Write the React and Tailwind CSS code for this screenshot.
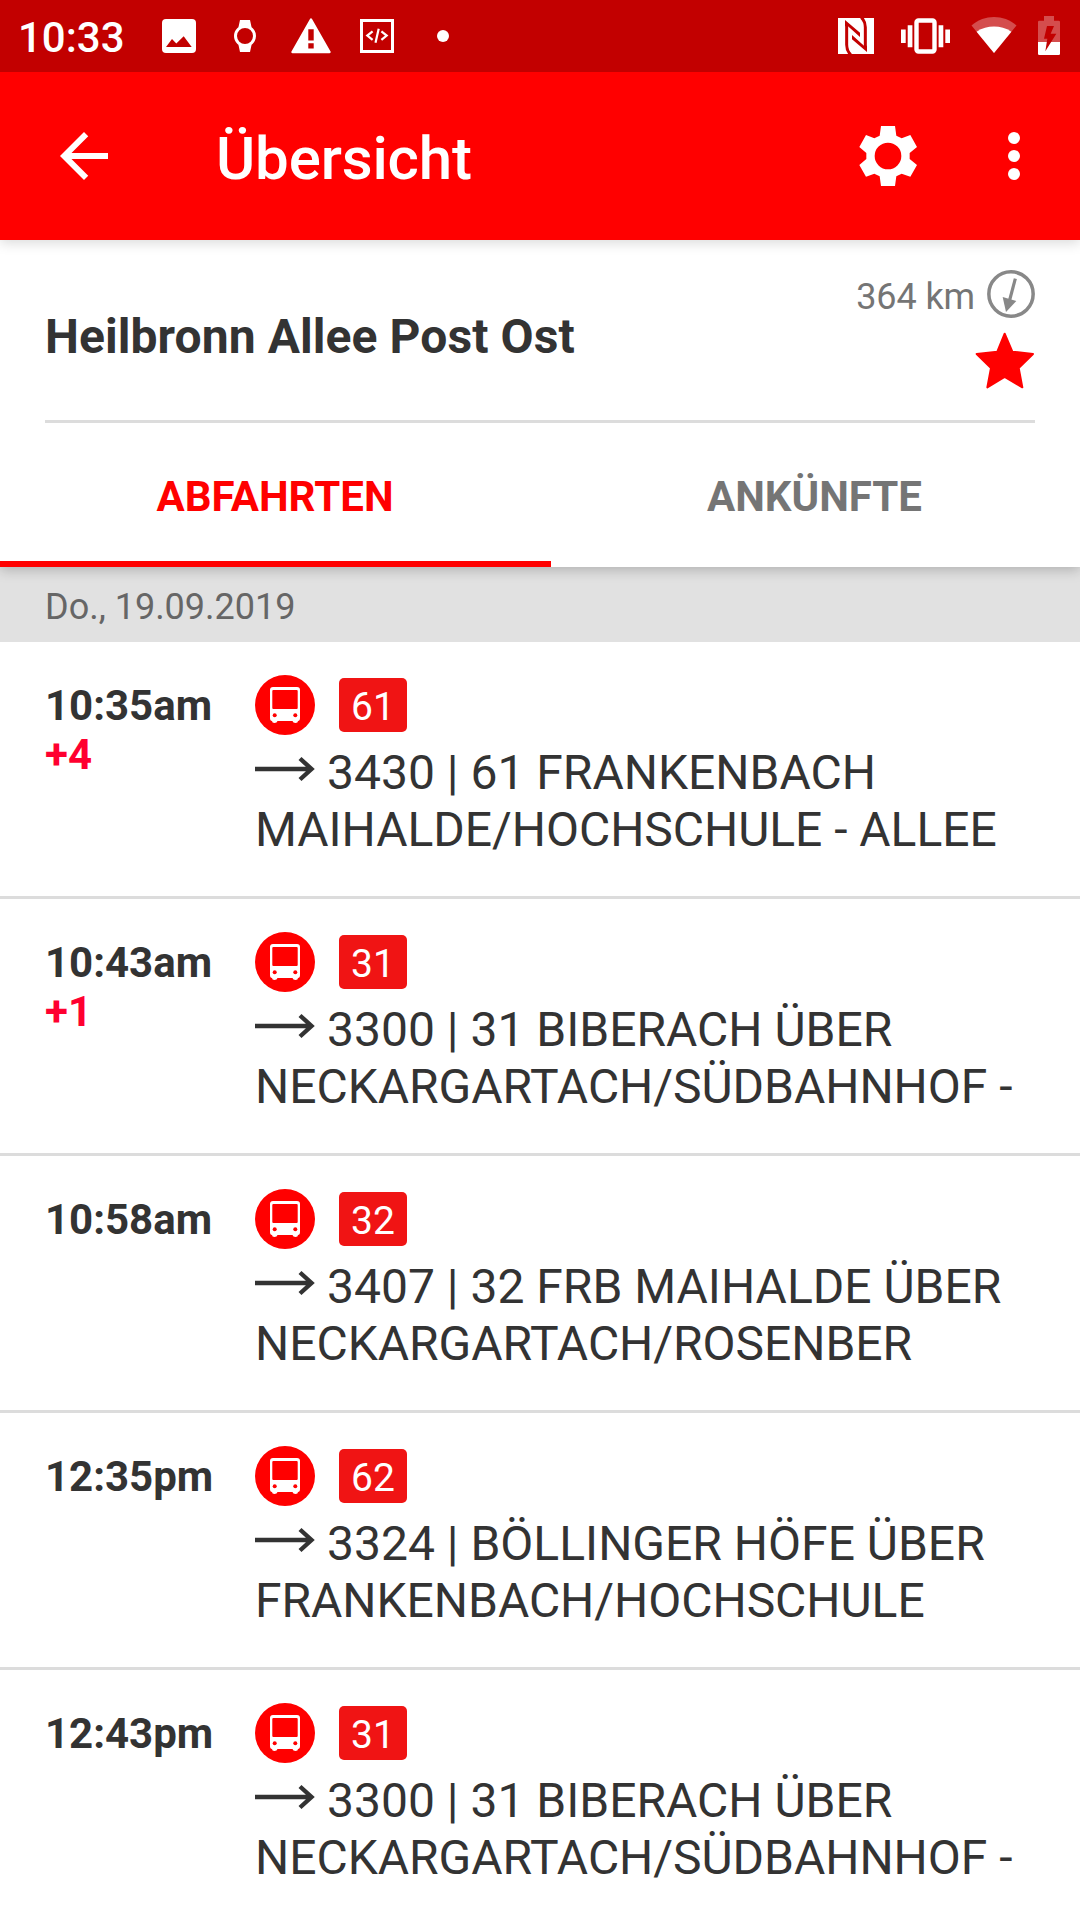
import React, { useState } from "react";
import { MdArrowBack } from "react-icons/md";

const DEPARTURES = [
  { time: "10:35am", delay: "+4", line: "61", to: ["3430 | 61 FRANKENBACH", "MAIHALDE/HOCHSCHULE - ALLEE"] },
  { time: "10:43am", delay: "+1", line: "31", to: ["3300 | 31 BIBERACH ÜBER", "NECKARGARTACH/SÜDBAHNHOF -"] },
  { time: "10:58am", delay: "", line: "32", to: ["3407 | 32 FRB MAIHALDE ÜBER", "NECKARGARTACH/ROSENBER"] },
  { time: "12:35pm", delay: "", line: "62", to: ["3324 | BÖLLINGER HÖFE ÜBER", "FRANKENBACH/HOCHSCHULE"] },
  { time: "12:43pm", delay: "", line: "31", to: ["3300 | 31 BIBERACH ÜBER", "NECKARGARTACH/SÜDBAHNHOF -"] },
];

// --- Status bar icons ---

const ImageIcon = () => (
  <svg className="w-[34px] h-[34px]" viewBox="0 0 34 34">
    <rect width="34" height="34" rx="4" fill="#fff" />
    <path d="M4 28l6-8 4.3 4.6 7.4-7.4L29.7 28z" fill="#c20000" />
  </svg>
);

const WatchIcon = () => (
  <svg className="w-[22px] h-[32px]" viewBox="0 0 22 32">
    <path d="M6 0h10l1.500 7h-13zM6 32h10l1.500-7h-13z" fill="#fff" />
    <circle cx="11" cy="16" r="9.500" fill="#c20000" stroke="#fff" strokeWidth="3" />
  </svg>
);

const WarningIcon = () => (
  <svg className="w-[40px] h-[36px]" viewBox="0 0 40 36">
    <path d="M20 1.500L38.500 34h-37z" fill="#fff" stroke="#fff" strokeWidth="2.400" strokeLinejoin="round" />
    <path d="M17.300 11.300h5.400v11.200h-5.400zM17.300 25.200h5.400v5.400h-5.400z" fill="#c20000" />
  </svg>
);

const CodeIcon = () => (
  <svg className="w-[34px] h-[34px]" viewBox="0 0 34 34" fill="none" stroke="#fff">
    <rect x="1.500" y="1.500" width="31" height="31" strokeWidth="3" />
    <path d="M12.600 12.300L7.300 16.600l5.300 4.300M21.400 12.300l5.300 4.300-5.300 4.300M18.700 9.700l-3.200 14" strokeWidth="2.200" />
  </svg>
);

const NfcIcon = () => (
  <svg className="w-[36px] h-[36px]" viewBox="0 0 108 108">
    <rect width="108" height="108" fill="#fff" />
    <g fill="none" stroke="#c20000">
      <path d="M26 16V80Q26 98 38 110" strokeWidth="9" />
      <path d="M82 92V28Q82 10 70 -2" strokeWidth="9" />
    </g>
    <path d="M21 6L66 44V57L30 25H21zM87 102L42 64V51L78 83H87z" fill="#c20000" />
  </svg>
);

const VibrateIcon = () => (
  <svg className="w-[49px] h-[36px]" viewBox="0 0 49 36" fill="#fff">
    <rect x="15.500" y="2.500" width="18" height="31" rx="2" fill="none" stroke="#fff" strokeWidth="4.400" />
    <path d="M0 11.500h4.700v13.500H0zM6.700 7.300h4.700v22H6.700zM37.600 7.300h4.700v22h-4.700zM44.300 11.500H49v13.500h-4.700z" />
  </svg>
);

const WifiIcon = () => (
  <svg className="w-[46px] h-[36px]" viewBox="0 0 46 36" fill="#fff">
    <path d="M23 36L.500 8.500C7 2.800 15 0 23 0s16 2.800 22.500 8.500z" opacity=".3" />
    <path d="M23 36L5.600 14.800C11 11 17 9.500 23 9.500s12 1.500 17.400 5.300z" />
  </svg>
);

const BatteryIcon = () => (
  <svg className="w-[22px] h-[39px]" viewBox="0 0 66 117" fill="#fff">
    <path d="M18 0h30v14h14q4 0 4 4v60H0V18q0-4 4-4h14z" opacity=".3" />
    <path d="M0 78h66v35q0 4-4 4H4q-4 0-4-4z" />
    <path d="M27 30h21L38 53h17L22 106l6-38H18z" fill="#c20000" />
  </svg>
);

// --- App icons ---

const GearIcon = () => (
  <svg className="w-[60px] h-[60px]" viewBox="0 0 180 180">
    <path
      fillRule="evenodd"
      fill="#fff"
      d="M69 0H111L115 29L131 37L157 27L177 63L155 81V99L177 117L157 152L131 143L115 151L111 180H69L65 151L49 143L24 152L4 117L25 99V81L4 63L24 27L49 37L65 29zM90 50a40 40 0 1 0 0 80a40 40 0 1 0 0-80z"
    />
  </svg>
);

const MoreIcon = () => (
  <svg className="w-[12px] h-[48px]" viewBox="0 0 12 48" fill="#fff">
    <circle cx="6" cy="6" r="6" />
    <circle cx="6" cy="24" r="6" />
    <circle cx="6" cy="42" r="6" />
  </svg>
);

const CompassIcon = () => (
  <svg className="w-[48px] h-[48px]" viewBox="0 0 144 144" fill="none" stroke="#888">
    <circle cx="72" cy="72" r="66.500" strokeWidth="10.500" />
    <path d="M85 26L68 90" strokeWidth="9.500" />
    <path d="M47 81L88 93L57 126z" fill="#888" stroke="none" />
  </svg>
);

const StarIcon = () => (
  <svg className="w-[60px] h-[57px]" viewBox="0 0 180 171">
    <path
      d="M89 5L112 59L174 66L131 108L142 166L89 135L37 166L48 108L5 66L67 59z"
      fill="#f00" stroke="#f00" strokeWidth="6" strokeLinejoin="round"
    />
  </svg>
);

const BusIcon = () => (
  <svg className="w-[60px] h-[60px]" viewBox="0 0 60 60">
    <circle cx="30" cy="30" r="30" fill="#f00" />
    <path
      d="M18 12h24q3 0 3 3v28q0 3-2 3v0q0 2-2.500 2t-3-2h-15q-.5 2-3 2T17 46v0q-2 0-2-3V15q0-3 3-3z"
      fill="#fff"
    />
    <rect x="17.300" y="15" width="25.400" height="19" rx="1" fill="#f00" />
    <circle cx="19.700" cy="40.300" r="2" fill="#f00" />
    <circle cx="40.300" cy="40.300" r="2" fill="#f00" />
  </svg>
);

const DirectionArrow = () => (
  <svg className="w-[60px] h-[26px] mr-[12px] mb-[7px]" viewBox="0 0 60 26" fill="none" stroke="#333" strokeWidth="4.400">
    <path d="M0 13h56M45 2.500L56.500 13L45 23.500" />
  </svg>
);

function StatusBar() {
  return (
    <div className="h-[72px] shrink-0 bg-[#c20000] flex items-center text-white pl-[18px] pr-[20px]">
      <span className="w-[144px] pt-[3px] text-[42px] leading-[49px] font-medium">10:33</span>
      <ImageIcon />
      <span className="ml-[38px]"><WatchIcon /></span>
      <span className="ml-[35px]"><WarningIcon /></span>
      <span className="ml-[29px]"><CodeIcon /></span>
      <span className="ml-[43px] size-3 rounded-full bg-white" />
      <div className="ml-auto flex items-center">
        <NfcIcon />
        <span className="ml-[27px]"><VibrateIcon /></span>
        <span className="ml-[21px] mb-[3px]"><WifiIcon /></span>
        <span className="ml-[21px] mb-[1px]"><BatteryIcon /></span>
      </div>
    </div>
  );
}

function Departure({ time, delay, line, to }) {
  return (
    <div className="h-[257px] shrink-0 flex border-b-3 border-[#dcdcdc] pl-[45px]">
      <div className="w-[210px] pt-[39px] text-[42px] leading-[49px] font-bold text-[#333]">
        <p>{time}</p>
        <p className="text-[#ff0030]">{delay}</p>
      </div>
      <div className="flex-1 pt-[33px]">
        <div className="flex items-center gap-6">
          <BusIcon />
          <span className="w-[68px] h-[54px] rounded-[5px] bg-[#f01414] pt-[4px] text-center text-[39px] leading-[51px] text-white">
            {line}
          </span>
        </div>
        <div className="mt-[9px] text-[48px] leading-[57px] text-[#333] whitespace-nowrap">
          <p className="flex items-center"><DirectionArrow />{to[0]}</p>
          <p className="tracking-[-0.04px]">{to[1]}</p>
        </div>
      </div>
    </div>
  );
}

function App() {
  const [tab, setTab] = useState("departures");

  const tabClass = (id) =>
    tab === id ? "border-[#f00] text-[#f00]" : "border-transparent text-[#757575]";

  return (
    <div className="w-[1080px] h-[1920px] overflow-hidden flex flex-col bg-white font-['Roboto',sans-serif]">
      <StatusBar />

      {/* App bar */}
      <header className="h-[168px] shrink-0 bg-[#f00] text-white flex items-center pl-[48px] pr-[60px] relative z-10 shadow-[0_3px_12px_rgba(0,0,0,0.15)] [clip-path:inset(0_0_-30px_0)]">
        <MdArrowBack className="size-[72px]" />
        <h1 className="ml-[96px] pt-[6px] text-[60px] leading-[70px] font-medium tracking-[-0.15px]">Übersicht</h1>
        <div className="ml-auto flex items-center gap-[90px]">
          <GearIcon />
          <MoreIcon />
        </div>
      </header>

      {/* Station */}
      <section className="mx-[45px] h-[183px] shrink-0 border-b-3 border-[#dcdcdc] flex justify-between">
        <h2 className="pt-[68px] text-[48px] leading-[57px] font-bold text-[#333] tracking-[0.08px]">Heilbronn Allee Post Ost</h2>
        <div className="pt-[30px] flex flex-col items-end">
          <div className="flex items-center gap-[12px] text-[36px] leading-[48px] text-[#757575]">
            <span className="pt-[6px] leading-[42px] tracking-[-0.1px]">364 km</span>
            <CompassIcon />
          </div>
          <div className="mt-[14px]"><StarIcon /></div>
        </div>
      </section>

      {/* Tabs */}
      <nav className="h-[144px] shrink-0 flex bg-white text-[42px] font-bold relative z-10 shadow-[0_3px_12px_rgba(0,0,0,0.22)] [clip-path:inset(0_0_-30px_0)]">
        <button className={`w-[551px] pt-[8px] pr-[1px] border-b-6 ${tabClass("departures")}`} onClick={() => setTab("departures")}>
          ABFAHRTEN
        </button>
        <button className={`flex-1 pt-[8px] pr-[2px] border-b-6 ${tabClass("arrivals")}`} onClick={() => setTab("arrivals")}>
          ANKÜNFTE
        </button>
      </nav>

      <div className="h-[75px] shrink-0 bg-[#e1e1e1] pl-[45px] pt-[5px] text-[36px] leading-[71px] text-[#666]">
        Do., 19.09.2019
      </div>

      {DEPARTURES.map((d, i) => (
        <Departure key={i} {...d} />
      ))}
    </div>
  );
}

export default App;
